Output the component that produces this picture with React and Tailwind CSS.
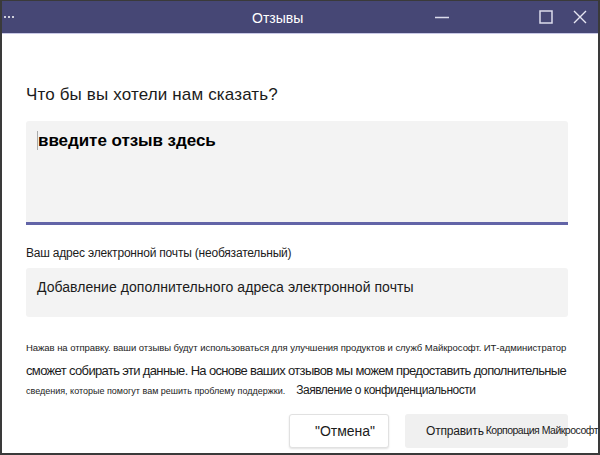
import React from 'react';

const font = { fontFamily: '"Liberation Sans", "Noto Sans", sans-serif' };

const TitleBar = () => (
  <div className="flex items-center h-[33px] bg-[#464775] border-b border-[#c8c8e6] text-white shrink-0">
    {/* more dots */}
    <div className="flex gap-[2px] ml-[2px] w-[14px]">
      <span className="w-[2px] h-[2px] bg-white rounded-full" />
      <span className="w-[2px] h-[2px] bg-white rounded-full" />
      <span className="w-[2px] h-[2px] bg-white rounded-full" />
    </div>
    <div className="ml-[234px] text-[14px] leading-none mt-[2px]">Отзывы</div>
    <div className="ml-auto flex items-center">
      <svg width="14" height="14" viewBox="0 0 14 14" className="mr-[90px]">
        <line x1="0" y1="7.5" x2="14" y2="7.5" stroke="#dcdcec" strokeWidth="1.5" />
      </svg>
      <svg width="14" height="14" viewBox="0 0 14 14" className="mr-[20px]">
        <rect x="1" y="1" width="12" height="12" fill="none" stroke="#dcdcec" strokeWidth="1.5" />
      </svg>
      <svg width="14" height="14" viewBox="0 0 14 14" className="mr-[11px]">
        <path d="M1 1 L13 13 M13 1 L1 13" stroke="#e6e6f2" strokeWidth="1.4" />
      </svg>
    </div>
  </div>
);

export default function App() {
  return (
    <div style={font} className="w-[600px] h-[455px] bg-white flex flex-col border-x-2 border-b-2 border-t border-[#3a3a3a] overflow-hidden text-[#1b1b1b]">
      <TitleBar />
      <div className="flex flex-col pl-[24px] pr-[30px]">
        <div className="mt-[51px] text-[17px] leading-[19px] tracking-[0.15px]">Что бы вы хотели нам сказать?</div>

        <div className="mt-[17px] h-[104px] bg-[#f3f3f3] rounded-t-[3px] border-b-[3px] border-[#6264a7] px-[11px] pt-[7px]">
          <span className="text-[17px] font-bold text-black border-l border-[#aaa] tracking-[-0.05px]">введите отзыв здесь</span>
        </div>

        <div className="mt-[21px] text-[12px] leading-[14px] tracking-[-0.2px] whitespace-nowrap">
          Ваш адрес электронной почты (необязательный)
        </div>

        <div className="mt-[8px] h-[49px] bg-[#f3f3f3] rounded-[3px] px-[11px] flex items-center pb-[10px]">
          <span className="text-[14px] tracking-[0.05px] whitespace-nowrap">Добавление дополнительного адреса электронной почты</span>
        </div>

        <div className="mt-[25px] text-[9.5px] leading-[12px] whitespace-nowrap tracking-[-0.05px]">
          Нажав на отправку. ваши отзывы будут использоваться для улучшения продуктов и служб Майкрософт. ИТ-администратор
        </div>
        <div className="mt-[9px] text-[13px] leading-[15px] whitespace-nowrap tracking-[-0.65px]">
          сможет собирать эти данные. На основе ваших отзывов мы можем предоставить дополнительные
        </div>
        <div className="mt-[5px] flex items-end whitespace-nowrap">
          <span className="text-[9px] leading-[12px] tracking-[0px]">сведения, которые помогут вам решить проблему поддержки.</span>
          <span className="ml-[11px] text-[12px] leading-[14px] tracking-[-0.5px]">Заявление о конфиденциальности</span>
        </div>

        <div className="mt-[17px] flex justify-end gap-[16px]">
          <button className="w-[100px] h-[34px] bg-white border border-[#e1e1e1] rounded-[3px] shadow-[0_1px_2px_rgba(0,0,0,0.12)] text-[14px] text-[#1b1b1b] pl-[12px]">
            "Отмена"
          </button>
          <button className="w-[163px] h-[34px] bg-[#f0f0f0] rounded-[3px] flex items-center pl-[21px] whitespace-nowrap overflow-visible">
            <span className="text-[12px] tracking-[-0.2px]">Отправить</span>
            <span className="ml-[2px] text-[10.5px] tracking-[-0.5px]">Корпорация Майкрософт</span>
          </button>
        </div>
      </div>
    </div>
  );
}
